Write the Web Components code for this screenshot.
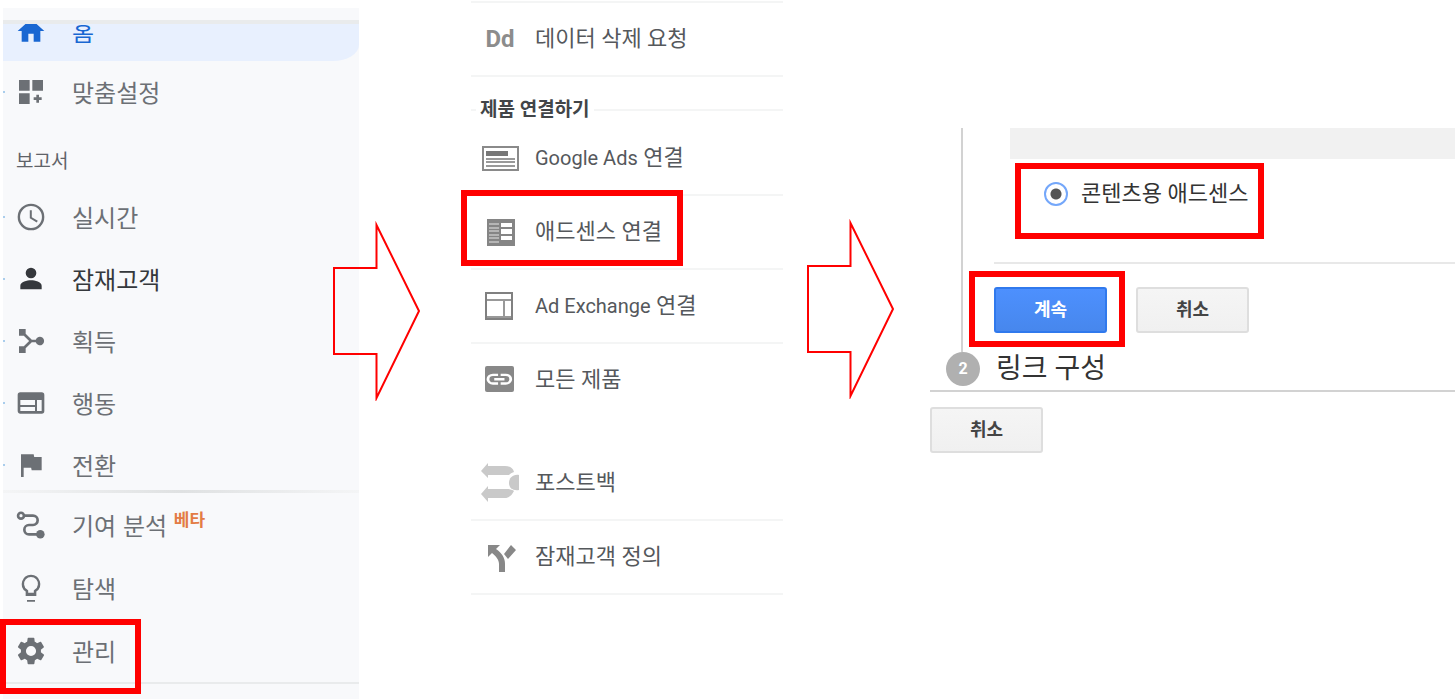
<!DOCTYPE html>
<html lang="ko">
<head>
<meta charset="utf-8">
<meta name="viewport" content="width=device-width, initial-scale=1">
<title>애드센스 연결</title>
<style>
  body {
    margin: 0;
    background: #fff;
    font-family: Roboto, "Noto Sans CJK KR", sans-serif;
  }
</style>
</head>
<body>
<link-guide></link-guide>

<script>
const NAV_ICONS = {
  home: '<path d="M10 20v-6h4v6h5v-8h3L12 3 2 12h3v8z"/>',
  customize: '<path d="M3 3h8v8H3zM13 3h8v8h-8zM3 13h8v8H3zM16 14h2v2h2v2h-2v2h-2v-2h-2v-2h2z"/>',
  clock: '<path d="M12 2a10 10 0 1 0 0 20 10 10 0 0 0 0-20zm0 18.2a8.2 8.2 0 1 1 0-16.4 8.2 8.2 0 0 1 0 16.4zM12.6 7h-1.5v6l5.2 3.1.8-1.2-4.5-2.7z"/>',
  person: '<path d="M12 11.5a4 4 0 1 0 0-8 4 4 0 0 0 0 8zm0 1.5c-2.9 0-8 1.2-8 4v2.6h16V17c0-2.800-5.100-4-8-4z"/>',
  acquire: '<path d="M3 3h5v3.600l4.600 4.400h3a3.200 3.200 0 1 1 0 2h-3L8 17.400V21H3v-5h3.600l4-4-4-4H3z"/>',
  web: '<path d="M20 4H4a2 2 0 0 0-2 2v12c0 1.100.9 2 2 2h16a2 2 0 0 0 2-2V6a2 2 0 0 0-2-2zm-5 14H4v-3h11zm0-4.500H4V9.800h11zm5 4.500h-3.500V9.800H20z"/>',
  flag: '<path d="M14.400 6L14 4H4.500v17h2v-7h5.600l.4 2H20V6z"/>',
  route: '<g fill="none" stroke="currentColor" stroke-width="2"><circle cx="4.500" cy="5" r="2.200"/><path d="M7 5h6.500a3.500 3.500 0 0 1 0 7h-3a3.500 3.500 0 0 0 0 7H17"/></g><circle cx="19" cy="19" r="3.200"/>',
  bulb: '<path d="M9 21h6v1.300H9zM12 2a7 7 0 0 0-4 12.700V18h8v-3.300A7 7 0 0 0 12 2zm2.900 11.200l-.8.600V15.500H9.900v-1.700l-.8-.6A5.200 5.200 0 1 1 14.900 13.200z"/>',
  gear: '<path d="M19.400 13a7.500 7.500 0 0 0 0-2l2.100-1.600a.5.5 0 0 0 .1-.7l-2-3.400a.5.500 0 0 0-.6-.2l-2.500 1a7.300 7.300 0 0 0-1.700-1L14.500 2.400A.5.500 0 0 0 14 2h-4a.5.500 0 0 0-.5.400l-.4 2.700a7.700 7.700 0 0 0-1.700 1l-2.500-1a.5.500 0 0 0-.6.200l-2 3.400a.5.500 0 0 0 .1.700L4.500 11a8 8 0 0 0 0 2l-2.100 1.600a.5.500 0 0 0-.1.700l2 3.400c.1.200.4.300.6.200l2.500-1c.5.400 1.100.700 1.700 1l.4 2.700c0 .2.300.4.500.4h4c.2 0 .5-.2.500-.4l.4-2.700a7.300 7.300 0 0 0 1.700-1l2.500 1c.2.100.5 0 .6-.2l2-3.400a.5.500 0 0 0-.1-.7zM12 15.800a3.800 3.800 0 1 1 0-7.600 3.800 3.800 0 0 1 0 7.600z"/>'
};

const PRODUCT_ICONS = {
  ads: '<path fill="none" stroke="#8a8a8a" stroke-width="2" d="M4 10h35v23H4z"/><path fill="#777" d="M7 14h22v5H7z"/><path fill="#999" d="M7 21h29v2H7zM7 24h29v2H7zM7 28h29v2H7z"/>',
  adsense: '<path fill="#858585" d="M8 8h28v27H8z"/><path fill="#b5b5b5" d="M10 12h10v2H10zM10 16h10v2H10zM10 19h10v2H10zM10 23h10v2H10zM10 26h10v2H10zM10 30h10v2H10z"/><path fill="#fff" d="M22 12h11v4H22zM22 18h11v5H22zM22 25h11v4H22z"/>',
  exchange: '<path fill="none" stroke="#808080" stroke-width="2" d="M7 8h26v26H7z"/><path fill="none" stroke="#999" stroke-width="2" d="M8 15h24M25 15v18M8 32h24"/>',
  link: '<rect x="6" y="7" width="29" height="26" rx="2" fill="#888"/><path fill="#fff" transform="translate(5 7) scale(1.280 1.100)" d="M4.200 12A2.800 2.800 0 0 1 7 9.200h4V7H7a5 5 0 0 0 0 10h4v-2.200H7A2.800 2.800 0 0 1 4.200 12zM8 13.100h8v-2.200H8zM17 7h-4v2.200h4a2.800 2.800 0 0 1 0 5.600h-4V17h4a5 5 0 0 0 0-10z"/>',
  postback: '<g fill="#c9c9c9"><path d="M2 9l7-8v3h17c5 0 8 2 9 6-3 1-4 2-5 3H9v3z"/><path d="M2 32l7-8v3h20c2 0 5 1 6 2-2 4-5 7-9 7H9v4z"/><path d="M40 13c-6-1-10 3-10 8s4 8 10 7z"/></g>',
  split: '<path fill="#888" d="M9 9h12l-4 4c6 4 9 9 9 15v8h-6v-8c0-4-3-8-7-11l-4 4zM32 9l5 5-8 9-4-5z"/>'
};

// Red callout border drawn around whatever is slotted in.
class CalloutFrame extends HTMLElement {
  constructor() {
    super();
    this.attachShadow({ mode: 'open' });
    this.shadowRoot.innerHTML = `
      <style>
        :host {
          display: block;
          position: relative;
          width: fit-content;
        }
        :host::after {
          content: "";
          position: absolute;
          inset: var(--frame-inset, -16px);
          border: 6px solid #f00;
          pointer-events: none;
          z-index: 2;
        }
      </style>
      <slot></slot>
    `;
  }
}

class FlowArrow extends HTMLElement {
  constructor() {
    super();
    this.attachShadow({ mode: 'open' });
    this.shadowRoot.innerHTML = `
      <style>
        :host { display: block; z-index: 1; }
        svg { display: block; }
      </style>
      <svg width="90" height="180" viewBox="0 0 90 180" aria-hidden="true">
        <path d="M1 47H43.500V4L86 90 43.500 177V133H1z" fill="none" stroke="#f00" stroke-width="2" stroke-miterlimit="10"/>
      </svg>
    `;
  }
}

class NavItem extends HTMLElement {
  constructor() {
    super();
    this.attachShadow({ mode: 'open' });
  }

  connectedCallback() {
    this.shadowRoot.innerHTML = `
      <style>
        :host {
          display: block;
          color: #6c7075;
        }
        :host([strong]) { color: #35383c; }
        :host([current]) { color: #1967d2; }
        a {
          position: relative;
          display: flex;
          align-items: center;
          gap: 25px;
          height: var(--row-height, 62px);
          padding-left: 12px;
          box-sizing: border-box;
          color: inherit;
          text-decoration: none;
          font-size: 24px;
          line-height: 32px;
          white-space: nowrap;
        }
        :host([current]) a {
          padding-bottom: 7px;
          border-bottom-right-radius: 26px 16px;
          background: #e8f0fe;
        }
        :host([expandable]) a::before {
          content: "";
          position: absolute;
          left: 0;
          width: 2px;
          height: 2px;
          background: #a9cdec;
        }
        svg {
          flex: none;
          width: 32px;
          height: 32px;
          fill: currentColor;
        }
        ::slotted(sup) {
          color: #e37c45;
          font-size: 17px;
          font-weight: 700;
          line-height: 16px;
        }
      </style>
      <a href="#${this.getAttribute('icon')}">
        <svg viewBox="0 0 24 24" aria-hidden="true">${NAV_ICONS[this.getAttribute('icon')]}</svg>
        <span><slot></slot></span>
      </a>
    `;
  }
}

class NavPanel extends HTMLElement {
  constructor() {
    super();
    this.attachShadow({ mode: 'open' });
    this.shadowRoot.innerHTML = `
      <style>
        :host {
          display: block;
          background: #f8f9fb;
          font-family: "Noto Sans CJK KR", sans-serif;
        }
        /* header edge stays above the scrolled list */
        .edge {
          position: relative;
          z-index: 1;
          height: 12px;
          border-bottom: 4px solid #e9ebec;
          background: #f8f9fb;
        }
        nav-item[current] {
          --row-height: 53px;
          margin-top: -16px;
        }
        h2 {
          margin: 0;
          padding: 25px 13px 14px;
          color: #5f6368;
          font-size: 19px;
          font-weight: 400;
          line-height: 24px;
        }
        .fade {
          height: 3px;
          margin-top: -6px;
          background: linear-gradient(90deg, #f4f5f6, #dfe1e2 50%, #f4f5f6);
        }
        .tools {
          --row-height: 63px;
          border-bottom: 2px solid #e9ebec;
        }
        callout-frame { --frame-inset: 0 -25px -12px -3px; }
      </style>
      <nav>
        <div class="edge"></div>
        <nav-item icon="home" current>홈</nav-item>
        <nav-item icon="customize" expandable>맞춤설정</nav-item>
        <h2>보고서</h2>
        <nav-item icon="clock" expandable>실시간</nav-item>
        <nav-item icon="person" expandable strong>잠재고객</nav-item>
        <nav-item icon="acquire" expandable>획득</nav-item>
        <nav-item icon="web" expandable>행동</nav-item>
        <nav-item icon="flag" expandable>전환</nav-item>
        <div class="fade"></div>
        <div class="tools">
          <nav-item icon="route">기여 분석 <sup>베타</sup></nav-item>
          <nav-item icon="bulb">탐색</nav-item>
          <callout-frame><nav-item icon="gear">관리</nav-item></callout-frame>
        </div>
      </nav>
    `;
  }
}

class ProductRow extends HTMLElement {
  constructor() {
    super();
    this.attachShadow({ mode: 'open' });
  }

  connectedCallback() {
    const icon = PRODUCT_ICONS[this.getAttribute('icon')];
    const text = this.getAttribute('initials');
    this.shadowRoot.innerHTML = `
      <style>
        :host {
          display: block;
          border-bottom: 2px solid #f4f5f5;
        }
        :host([plain]) { border-bottom-color: transparent; }
        a {
          display: flex;
          align-items: center;
          gap: 14px;
          height: 72px;
          padding-left: 8px;
          color: #55585c;
          text-decoration: none;
          font-size: 22px;
          line-height: 28px;
          white-space: nowrap;
        }
        .icon {
          flex: none;
          width: 42px;
          text-align: center;
        }
        .initials {
          color: #8c8c8c;
          font-size: 24px;
          font-weight: 700;
        }
        svg {
          display: block;
          width: 42px;
          height: 42px;
        }
        ::slotted(span) { font-size: 20px; }
      </style>
      <a href="#${this.getAttribute('icon') || 'data-deletion'}">
        ${icon
          ? `<span class="icon"><svg viewBox="0 0 42 42" aria-hidden="true">${icon}</svg></span>`
          : `<span class="icon initials">${text}</span>`}
        <span><slot></slot></span>
      </a>
    `;
  }
}

class ProductList extends HTMLElement {
  constructor() {
    super();
    this.attachShadow({ mode: 'open' });
    this.shadowRoot.innerHTML = `
      <style>
        :host { display: block; }
        section:first-of-type { border-top: 2px solid #f4f5f5; }
        h2 {
          display: flex;
          align-items: center;
          gap: 4px;
          margin: 0;
          padding: 21px 0 0;
          color: #424548;
          font-size: 19px;
          font-weight: 700;
          line-height: 24px;
          white-space: nowrap;
        }
        h2::before, h2::after {
          content: "";
          height: 2px;
          background: #f4f5f5;
        }
        h2::before { width: 5px; }
        h2::after { flex: 1; }
        .more { margin-top: 29px; }
        /* the callout hugs the label, the row underline stays full width */
        .marked {
          border-bottom: 2px solid #f4f5f5;
        }
        .marked product-row { margin-bottom: -2px; }
        callout-frame { --frame-inset: -6px -21px 4px -10px; }
      </style>
      <section>
        <product-row initials="Dd">데이터 삭제 요청</product-row>
      </section>
      <section>
        <h2>제품 연결하기</h2>
        <product-row icon="ads"><span>Google Ads</span> 연결</product-row>
        <div class="marked"><callout-frame><product-row icon="adsense" plain>애드센스 연결</product-row></callout-frame></div>
        <product-row icon="exchange"><span>Ad Exchange</span> 연결</product-row>
        <product-row icon="link" plain>모든 제품</product-row>
      </section>
      <section class="more">
        <product-row icon="postback">포스트백</product-row>
        <product-row icon="split">잠재고객 정의</product-row>
      </section>
    `;
  }
}

class ActionButton extends HTMLElement {
  constructor() {
    super();
    this.attachShadow({ mode: 'open' });
    this.shadowRoot.innerHTML = `
      <style>
        :host { display: block; }
        button {
          display: block;
          min-width: 113px;
          height: 46px;
          padding: 0 16px;
          border: 2px solid #dedede;
          border-radius: 3px;
          background: linear-gradient(#f5f5f5, #f0f0f0);
          color: #444;
          font-family: inherit;
          font-size: 18px;
          font-weight: 700;
          line-height: 24px;
          cursor: pointer;
        }
        :host([primary]) button {
          border-color: #3079ed;
          background: linear-gradient(#4d90fe, #4787ed);
          color: #fff;
        }
      </style>
      <button type="button"><slot></slot></button>
    `;
  }
}

class LinkSetup extends HTMLElement {
  constructor() {
    super();
    this.attachShadow({ mode: 'open' });
    this.shadowRoot.innerHTML = `
      <style>
        :host { display: block; }
        .step-body {
          margin-left: 31px;
          padding: 0 0 19px 31px;
          border-left: 2px solid #d2d2d2;
        }
        .bar {
          height: 31px;
          margin-left: 16px;
          background: #f1f1f1;
        }
        .choice {
          padding: 19px 0 52px 50px;
          border-bottom: 2px solid #e8e8e8;
        }
        .choice callout-frame { --frame-inset: -15px -16px -29px -29px; }
        label {
          display: flex;
          align-items: center;
          gap: 13px;
          color: #333;
          font-size: 22px;
          line-height: 32px;
          white-space: nowrap;
        }
        input {
          appearance: none;
          width: 24px;
          height: 24px;
          margin: 0;
          border: 2px solid #74a7fa;
          border-radius: 50%;
          background: #fff;
        }
        input:checked {
          background: radial-gradient(circle, #555 5px, #fff 6px);
        }
        .actions {
          display: flex;
          gap: 29px;
          padding-top: 23px;
        }
        .actions callout-frame { --frame-inset: -16px -18px -14px -25px; }
        h2 {
          display: flex;
          align-items: center;
          gap: 16px;
          height: 34px;
          margin: 0;
          padding: 0 0 4px 16px;
          border-bottom: 2px solid #d2d2d2;
          color: #333;
          font-size: 28px;
          font-weight: 400;
          line-height: 36px;
        }
        .number {
          width: 34px;
          height: 34px;
          border-radius: 50%;
          background: #b0b0b0;
          color: #fff;
          font-size: 16px;
          font-weight: 700;
          line-height: 34px;
          text-align: center;
        }
        footer {
          display: flex;
          padding-top: 15px;
        }
      </style>
      <form>
        <div class="step-body">
          <div class="bar"></div>
          <div class="choice">
            <callout-frame>
              <label for="content"><input type="radio" id="content" name="product" checked>콘텐츠용 애드센스</label>
            </callout-frame>
          </div>
          <div class="actions">
            <callout-frame><action-button primary>계속</action-button></callout-frame>
            <action-button>취소</action-button>
          </div>
        </div>
        <h2><span class="number">2</span>링크 구성</h2>
        <footer><action-button>취소</action-button></footer>
      </form>
    `;
  }
}

class LinkGuide extends HTMLElement {
  constructor() {
    super();
    this.attachShadow({ mode: 'open' });
    this.shadowRoot.innerHTML = `
      <style>
        :host {
          display: grid;
          grid-template-columns:
            minmax(0, 356fr) minmax(0, 112fr) minmax(0, 312fr)
            minmax(0, 147fr) minmax(0, 525fr);
          min-height: 100vh;
          padding-left: 3px;
          box-sizing: border-box;
        }
        nav-panel { margin-top: 8px; }
        .first { margin: 221px 0 0 -26px; }
        .second { margin: 219px 0 0 24px; }
        product-list { margin-top: 1px; }
        link-setup { margin-top: 128px; }
      </style>
      <nav-panel></nav-panel>
      <flow-arrow class="first"></flow-arrow>
      <product-list></product-list>
      <flow-arrow class="second"></flow-arrow>
      <link-setup></link-setup>
    `;
  }
}

customElements.define('callout-frame', CalloutFrame);
customElements.define('flow-arrow', FlowArrow);
customElements.define('nav-item', NavItem);
customElements.define('nav-panel', NavPanel);
customElements.define('product-row', ProductRow);
customElements.define('product-list', ProductList);
customElements.define('action-button', ActionButton);
customElements.define('link-setup', LinkSetup);
customElements.define('link-guide', LinkGuide);
</script>
</body>
</html>
